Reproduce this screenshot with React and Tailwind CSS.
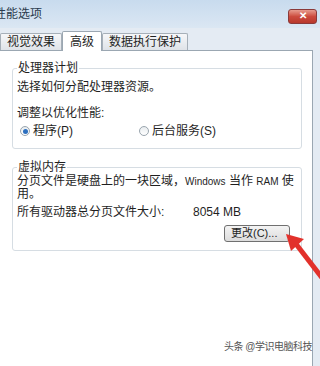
import React from "react";

const font = { fontFamily: '"Liberation Sans", "Noto Sans CJK SC", sans-serif' };

const Radio = ({ checked }) => (
  <span className="inline-flex items-center justify-center w-[10px] h-[10px] rounded-full border border-[#9aa5ae] bg-gradient-to-b from-[#e8ecef] to-[#ffffff]">
    {checked && <span className="w-[5px] h-[5px] rounded-full bg-[#2d6fbf]" />}
  </span>
);

const Tab = ({ children, active }) => (
  <div
    className={
      active
        ? "h-[20px] px-[7px] flex items-center bg-white border border-b-0 border-[#9ba7b2] rounded-t-[2px] relative z-10 -mb-px"
        : "h-[17px] px-[6px] flex items-center bg-gradient-to-b from-[#f6f7f9] to-[#dfe3e8] border border-b-0 border-[#a6afb8] rounded-t-[2px]"
    }
  >
    {children}
  </div>
);

export default function App() {
  return (
    <div
      className="w-[320px] h-[366px] relative overflow-hidden bg-[#e4ebf3] text-[12px] text-[#1f1f1f] flex flex-col"
      style={font}
    >
      {/* title bar */}
      <div className="h-[28px] shrink-0 flex items-center justify-between bg-gradient-to-b from-[#c8dbee] to-[#dbe7f3] pr-[3px]">
        <span className="ml-[-6px] text-[12px] text-[#2a3a4c]">性能选项</span>
        <div className="w-[29px] h-[15px] mt-[4px] rounded-[3px] border border-[#8a3a3a] bg-gradient-to-b from-[#e69b8f] via-[#cc4b3e] to-[#b8382c] flex items-center justify-center text-white text-[10px] font-bold leading-none">
          ✕
        </div>
      </div>

      {/* tabs */}
      <div className="flex items-end h-[22px] shrink-0 pl-0 pr-[8px]">
        <Tab>视觉效果</Tab>
        <Tab active>高级</Tab>
        <Tab>数据执行保护</Tab>
      </div>

      {/* panel */}
      <div className="flex-1 mr-[7px] bg-white border-t border-r border-[#9ba7b2] pl-[12px] pr-[10px]">
        <fieldset className="mt-[10px] border border-[#d6dde3] rounded-[3px] px-[4px] pb-[9px]">
          <legend className="leading-[14px] px-px">处理器计划</legend>
          <div className="mt-[4px] leading-[16px]">选择如何分配处理器资源。</div>
          <div className="mt-[10px] leading-[16px]">调整以优化性能:</div>
          <div className="mt-[2px] flex items-center leading-[16px]">
            <div className="w-[122px] flex items-center gap-[3px] pl-[3px]">
              <Radio checked />
              <span>程序(P)</span>
            </div>
            <div className="flex items-center gap-[3px]">
              <Radio />
              <span>后台服务(S)</span>
            </div>
          </div>
        </fieldset>

        <fieldset className="mt-[11px] border border-[#d6dde3] rounded-[3px] px-[4px] pb-[8px]">
          <legend className="leading-[14px] px-px">虚拟内存</legend>
          <div className="mt-[1px] leading-[13px]">
            <div className="whitespace-nowrap">
              分页文件是硬盘上的一块区域，<span className="text-[10px]">Windows</span> 当作{" "}
              <span className="text-[10px]">RAM</span> 使
            </div>
            <div>用。</div>
          </div>
          <div className="mt-[3px] flex leading-[16px]">
            <span className="w-[176px]">所有驱动器总分页文件大小:</span>
            <span>8054 MB</span>
          </div>
          <div className="mt-[5px] flex justify-end pr-[7px]">
            <button className="w-[66px] h-[17px] border border-[#707070] rounded-[3px] bg-gradient-to-b from-[#f4f4f4] to-[#dcdcdc] text-[11px] leading-none text-left pl-[6px]">
              更改(C)...
            </button>
          </div>
        </fieldset>
      </div>

      {/* red arrow overlay */}
      <svg className="absolute left-0 top-0" width="320" height="366" viewBox="0 0 320 366">
        <line x1="296" y1="244" x2="330" y2="288" stroke="#e2312b" strokeWidth="5" />
        <polygon points="286,234 304,239 291,251" fill="#e2312b" />
      </svg>

      {/* watermark */}
      <div className="absolute right-[8px] bottom-[12px] text-[10px] text-[#555] tracking-[-0.5px]">
        头条 @学识电脑科技
      </div>
    </div>
  );
}
